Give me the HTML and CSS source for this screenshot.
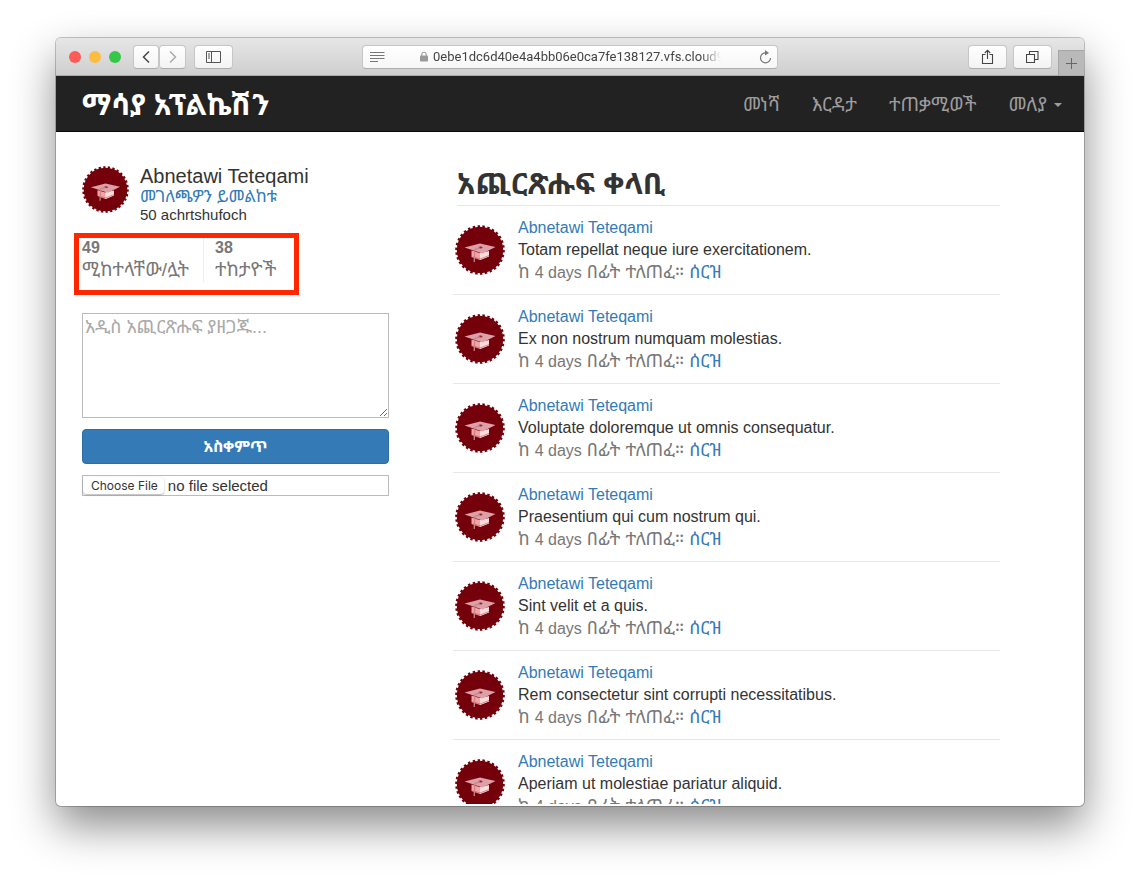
FILE: index.html
```html
<!DOCTYPE html>
<html lang="am">
<head>
<meta charset="utf-8">
<meta name="viewport" content="width=device-width, initial-scale=1">
<title>ማሳያ አፕልኬሽን</title>
<link rel="stylesheet" href="styles.css">
</head>
<body>
<svg class="sprite" aria-hidden="true">
  <symbol id="badge" viewBox="0 0 50 50">
    <circle cx="25" cy="25" r="23.200" fill="#73000a"/>
    <circle cx="25" cy="25" r="23.200" fill="none" stroke="#73000a" stroke-width="3.200" pathLength="30" stroke-dasharray=".5 .5"/>
    <path d="M16.500 25.500l8 2.600 9-1v4.400l-8.500 3.500-8.500-3z" fill="#f5a3a6"/>
    <path d="M25 28l9-2v5.500l-9 3.500z" fill="#fbdcdc"/>
    <path d="M18 31.800l7 2.200 9-3.500" fill="none" stroke="#b5555c" stroke-width=".6"/>
    <path d="M9.500 22.500L25 18.500l15.500 3.500-13 6.500z" fill="#dda0a6"/>
    <ellipse cx="25.500" cy="22.500" rx="2" ry="1" fill="#8f2630"/>
    <path d="M25 22.800l-5.200 1.700-.6 12.500" fill="none" stroke="#c9858a" stroke-width="1.300"/>
  </symbol>
</svg>
<div class="window">
  <header class="toolbar">
    <div class="lights"><span class="light red"></span><span class="light amber"></span><span class="light green"></span></div>
    <div class="history">
      <button class="tool" aria-label="Back"><svg width="10" height="14" viewBox="0 0 10 14"><path d="M8 1.500L2.500 7 8 12.500" fill="none" stroke="#444" stroke-width="1.500"/></svg></button>
      <button class="tool" aria-label="Forward"><svg width="10" height="14" viewBox="0 0 10 14"><path d="M2 1.500L7.500 7 2 12.500" fill="none" stroke="#aaa" stroke-width="1.500"/></svg></button>
    </div>
    <button class="tool wide" aria-label="Sidebar"><svg width="16" height="12" viewBox="0 0 16 12"><path d="M.5.5h14v11H.5zM5.500.5v11M2 3h2M2 5h2M2 7h2" fill="none" stroke="#555"/></svg></button>
    <div class="address">
      <svg width="15" height="12" viewBox="0 0 15 12"><path d="M0 1.500h14.500M0 4.500h14.500M0 7.500h14.500M0 10.500h8" stroke="#777"/></svg>
      <div class="location">
        <svg width="8" height="11" viewBox="0 0 9 11"><rect y="4.500" width="9" height="6.500" rx="1" fill="#999"/><path d="M2 5V3.200a2.500 2.500 0 015 0V5" fill="none" stroke="#999" stroke-width="1.200"/></svg>
        <span class="url">0ebe1dc6d40e4a4bb06e0ca7fe138127.vfs.cloud9</span>
      </div>
      <button class="reload" aria-label="Reload"><svg width="13" height="14" viewBox="0 0 13 14"><path d="M7 2.900A5 5 0 1011.500 8" fill="none" stroke="#777" stroke-width="1.200"/><path d="M6 0l4 2.900L6 5.600z" fill="#777"/></svg></button>
    </div>
    <button class="tool wide" aria-label="Share"><svg width="13" height="16" viewBox="0 0 13 16"><path d="M4.500 5.500h-3v9h10v-9h-3M6.500 10V1.500M3.800 4L6.500 1.200 9.200 4" fill="none" stroke="#444" stroke-width="1.100"/></svg></button>
    <button class="tool wide" aria-label="Tabs"><svg width="13" height="13" viewBox="0 0 13 13"><path d="M.5 4.500h8v8h-8zM3.500 4.500V1.500h8.500v8H8.500" fill="none" stroke="#444" stroke-width="1.100"/></svg></button>
    <button class="newtab" aria-label="New tab"><svg width="11" height="11" viewBox="0 0 11 11"><path d="M5.500 0v11M0 5.500h11" stroke="#666"/></svg></button>
  </header>
  <nav class="navbar">
    <a class="brand" href="#">ማሳያ አፕልኬሽን</a>
    <div class="links">
      <a href="#">መነሻ</a>
      <a href="#">እርዳታ</a>
      <a href="#">ተጠቃሚወች</a>
      <a class="menu" href="#">መለያ<span class="caret"></span></a>
    </div>
  </nav>
  <main class="page">
    <aside class="side">
      <section class="user">
        <svg class="avatar small" aria-hidden="true"><use href="#badge"/></svg>
        <div>
          <h1>Abnetawi Teteqami</h1>
          <a href="#">መገለጫዎን ይመልከቱ</a>
          <p>50 achrtshufoch</p>
        </div>
      </section>
      <section class="stats">
        <a href="#"><strong>49</strong><span>ሚከተላቸው/ሏት</span></a>
        <a href="#"><strong>38</strong><span>ተከታዮች</span></a>
      </section>
      <form class="compose">
        <textarea aria-label="አዲስ አጪርጽሑፍ" placeholder="አዲስ አጪርጽሑፍ ያዘጋጁ..."></textarea>
        <button class="save" type="button">አስቀምጥ</button>
        <label class="file"><input type="file"><span class="choose">Choose File</span><span>no file selected</span></label>
      </form>
    </aside>
    <section class="feed">
      <h2>አጪርጽሑፍ ቀላቢ</h2>
      <ol>
        <li><svg class="avatar" aria-hidden="true"><use href="#badge"/></svg><div><a href="#">Abnetawi Teteqami</a><p>Totam repellat neque iure exercitationem.</p><p class="time">ከ <span>4 days</span> በፊት ተለጠፈ። <a href="#">ሰርዝ</a></p></div></li>
        <li><svg class="avatar" aria-hidden="true"><use href="#badge"/></svg><div><a href="#">Abnetawi Teteqami</a><p>Ex non nostrum numquam molestias.</p><p class="time">ከ <span>4 days</span> በፊት ተለጠፈ። <a href="#">ሰርዝ</a></p></div></li>
        <li><svg class="avatar" aria-hidden="true"><use href="#badge"/></svg><div><a href="#">Abnetawi Teteqami</a><p>Voluptate doloremque ut omnis consequatur.</p><p class="time">ከ <span>4 days</span> በፊት ተለጠፈ። <a href="#">ሰርዝ</a></p></div></li>
        <li><svg class="avatar" aria-hidden="true"><use href="#badge"/></svg><div><a href="#">Abnetawi Teteqami</a><p>Praesentium qui cum nostrum qui.</p><p class="time">ከ <span>4 days</span> በፊት ተለጠፈ። <a href="#">ሰርዝ</a></p></div></li>
        <li><svg class="avatar" aria-hidden="true"><use href="#badge"/></svg><div><a href="#">Abnetawi Teteqami</a><p>Sint velit et a quis.</p><p class="time">ከ <span>4 days</span> በፊት ተለጠፈ። <a href="#">ሰርዝ</a></p></div></li>
        <li><svg class="avatar" aria-hidden="true"><use href="#badge"/></svg><div><a href="#">Abnetawi Teteqami</a><p>Rem consectetur sint corrupti necessitatibus.</p><p class="time">ከ <span>4 days</span> በፊት ተለጠፈ። <a href="#">ሰርዝ</a></p></div></li>
        <li><svg class="avatar" aria-hidden="true"><use href="#badge"/></svg><div><a href="#">Abnetawi Teteqami</a><p>Aperiam ut molestiae pariatur aliquid.</p><p class="time">ከ <span>4 days</span> በፊት ተለጠፈ። <a href="#">ሰርዝ</a></p></div></li>
      </ol>
    </section>
  </main>
</div>
</body>
</html>
```

FILE: styles.css
```css
* { box-sizing: border-box; }
body {
  margin: 0;
  height: 100vh;
  padding: 38px 56px 74px;
  display: flex;
  background: #fff;
  color: #333;
  font: 16px/22px "Liberation Sans", "Noto Sans Ethiopic", "Noto Sans", sans-serif;
  overflow: hidden;
}
h1, h2, p, ol { margin: 0; padding: 0; }
a { color: #337ab7; text-decoration: none; }
button { font: inherit; margin: 0; padding: 0; cursor: pointer; }
svg { display: block; flex: none; }
.sprite { position: absolute; width: 0; height: 0; }

.window {
  flex: 1;
  min-width: 0;
  display: flex;
  flex-direction: column;
  overflow: hidden;
  border-radius: 5px;
  background: #fff;
  box-shadow: 0 0 0 1px rgba(0, 0, 0, .22), 0 20px 44px rgba(0, 0, 0, .46);
}
.toolbar {
  flex: none;
  height: 38px;
  display: flex;
  align-items: center;
  padding-left: 13px;
  background: linear-gradient(#e6e6e6, #cfcfcf);
  border-bottom: 1px solid #aaa;
}
.lights { display: flex; gap: 8px; margin-right: 12px; }
.light { width: 12px; height: 12px; border-radius: 50%; }
.red { background: #fc5b57; }
.amber { background: #fdbc40; }
.green { background: #34c749; }
.history { display: flex; margin-right: 8px; }
.tool {
  width: 26px;
  height: 24px;
  display: flex;
  align-items: center;
  justify-content: center;
  border: 1px solid #c6c6c6;
  border-bottom-color: #adadad;
  border-radius: 4px;
  background: linear-gradient(#fff, #f3f3f3);
}
.history .tool + .tool { width: 27px; }
.tool.wide { width: 39px; }
.address {
  flex: 0 1 416px;
  min-width: 0;
  height: 24px;
  margin: 0 auto 0 129px;
  padding: 0 5px 0 7px;
  display: flex;
  align-items: center;
  justify-content: space-between;
  border: 1px solid #c6c6c6;
  border-bottom-color: #adadad;
  border-radius: 4px;
  background: linear-gradient(#fff, #f7f7f7);
}
.location { display: flex; align-items: center; gap: 5px; min-width: 0; overflow: hidden; }
.url {
  font: 13px/18px Roboto, "Liberation Sans", sans-serif;
  color: #444;
  white-space: nowrap;
  -webkit-mask-image: linear-gradient(90deg, #000 92%, transparent 99%);
  mask-image: linear-gradient(90deg, #000 92%, transparent 99%);
}
.reload { border: 0; background: none; }
.toolbar > .address ~ .tool { margin-right: 6px; }
.newtab {
  align-self: flex-end;
  width: 26px;
  height: 25px;
  display: flex;
  align-items: center;
  justify-content: center;
  border: 1px solid #a5a5a5;
  border-width: 1px 0 0 1px;
  background: #b9b9b9;
}

.navbar {
  flex: none;
  height: 56px;
  padding: 3px 22px 0 26px;
  display: flex;
  align-items: center;
  justify-content: space-between;
  background: #222;
  border-bottom: 1px solid #080808;
}
.brand { color: #fff; font-size: 29px; line-height: 36px; font-weight: bold; }
.links { display: flex; gap: 32px; }
.links a { color: #9d9d9d; font-size: 19px; }
.menu { display: flex; align-items: center; gap: 7px; }
.caret { border: 4px solid transparent; border-top-color: #9d9d9d; border-bottom: 0; }

.page {
  flex: 1;
  min-height: 0;
  overflow: hidden;
  display: grid;
  grid-template-columns: 307fr 547fr;
  column-gap: 64px;
  align-items: start;
  margin-bottom: 2px;
  padding: 33px 84px 0 26px;
}
.user { display: flex; gap: 11px; }
.user a { display: block; font-size: 17px; line-height: 20px; }
.user p { font-size: 15px; line-height: 15px; }
.user h1 { font-size: 20px; line-height: 22px; font-weight: normal; }
.avatar { width: 50px; height: 50px; }
.avatar.small { width: 47px; height: 47px; margin-top: 1px; }
.stats {
  display: flex;
  width: 225px;
  height: 62px;
  margin: 11px 0 18px -8px;
  padding: 0 3px;
  border: 5px solid #ff2600;
}
.stats a { color: #777; height: 44px; padding-right: 14px; white-space: nowrap; }
.stats a + a { border-left: 1px solid #eee; padding: 0 0 0 11px; }
.stats strong { display: block; font-size: 16px; line-height: 20px; }
.stats span { font-size: 19px; line-height: 24px; }
.compose { display: grid; gap: 11px; }
textarea {
  display: block;
  width: 100%;
  height: 105px;
  padding: 2px;
  border: 1px solid #bbb;
  font: inherit;
  font-size: 18px;
  outline: 0;
  resize: vertical;
}
textarea::placeholder { color: #a9a9a9; }
.save {
  height: 35px;
  border: 1px solid #2e6da4;
  border-radius: 4px;
  background: #337ab7;
  color: #fff;
  font-weight: bold;
}
.file {
  display: flex;
  align-items: center;
  gap: 4px;
  height: 21px;
  border: 1px solid #bbb;
  font-size: 15px;
  line-height: 18px;
  position: relative;
}
.file input { position: absolute; width: 1px; height: 1px; opacity: 0; }
.choose {
  padding: 0 6px 0 8px;
  border-radius: 4px;
  box-shadow: 0 1px 2px rgba(0, 0, 0, .3);
  font: 12px/17px Inter, sans-serif;
}
.feed h2 {
  margin-left: 4px;
  padding-bottom: 3px;
  border-bottom: 1px solid #e7e7e7;
  font-size: 30px;
  line-height: 37px;
}
.feed ol { list-style: none; }
.feed li {
  display: flex;
  align-items: center;
  gap: 13px;
  padding: 11px 2px;
  border-bottom: 1px solid #e7e7e7;
}
.time { color: #777; font-size: 18px; height: 22px; }
.time span { font-size: 16px; line-height: 16px; }
```
